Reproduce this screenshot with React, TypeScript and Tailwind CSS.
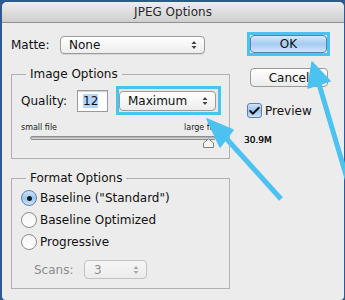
import { Check } from "lucide-react";

const font = { fontFamily: '"DejaVu Sans", "Liberation Sans", sans-serif' };

function Stepper({ dim = false }: { dim?: boolean }) {
    return (
        <svg width="6" height="10" viewBox="0 0 6 10" className="shrink-0">
            <path d="M0.5 4 L3 1 L5.5 4 Z" fill={dim ? "#a8a8a8" : "#444"} />
            <path d="M0.5 6 L3 9 L5.5 6 Z" fill={dim ? "#a8a8a8" : "#444"} />
        </svg>
    );
}

function Radio({ checked }: { checked?: boolean }) {
    return (
        <span
            className={`flex h-[16px] w-[16px] shrink-0 items-center justify-center rounded-full border ${
                checked
                    ? "border-[#5a7fb3] bg-gradient-to-b from-[#cfe3f8] via-[#9cc6f0] to-[#c9e2fa]"
                    : "border-[#8c8c8c] bg-gradient-to-b from-[#f4f4f4] to-[#ffffff]"
            }`}
        >
            {checked && <span className="h-[5px] w-[5px] rounded-full bg-[#1a1a1a]" />}
        </span>
    );
}

export default function App() {
    return (
        <div className="relative h-[300px] w-[345px] overflow-hidden bg-[#2e5b8f]" style={font}>
            {/* Dialog window */}
            <div className="ml-[2px] mt-[2px] flex h-[298px] w-[342px] flex-col rounded-t-[5px] rounded-b-[4px] bg-[#ececec] text-[12px] text-[#111]">
                {/* Title bar */}
                <div className="flex h-[21px] shrink-0 items-center justify-center rounded-t-[5px] border-b border-[#8f8f8f] bg-gradient-to-b from-[#ededed] to-[#cfcfcf] text-[12px] text-[#2a2a2a]">
                    JPEG Options
                </div>

                <div className="flex pl-[9px]">
                    {/* Left column */}
                    <div className="flex w-[219px] flex-col">
                        <div className="mt-[13px] flex h-[18px] items-center">
                            <span className="w-[49px]">Matte:</span>
                            <div className="flex h-[18px] w-[145px] items-center justify-between rounded-[4px] border border-[#9b9b9b] bg-gradient-to-b from-[#ffffff] to-[#ededed] pl-[8px] pr-[7px] shadow-[0_1px_0_#d8d8d8]">
                                <span>None</span>
                                <Stepper />
                            </div>
                        </div>

                        {/* Image Options */}
                        <fieldset className="mt-[13px] h-[92px] border border-[#b0b0b0] p-0">
                            <legend className="ml-[14px] px-[4px] leading-[14px]">Image Options</legend>
                            <div className="mt-[5px] flex h-[29px] items-center pl-[9px]">
                                <span className="w-[56px]">Quality:</span>
                                <div className="flex h-[22px] w-[31px] items-center border border-[#9a9a9a] bg-white pl-[5px] shadow-[inset_0_1px_1px_#cfcfcf]">
                                    <span className="bg-[#b5d5fc] leading-[14px]">12</span>
                                </div>
                                <div className="ml-[8px] flex h-[29px] w-[105px] items-center border-[3px] border-[#4cc2f0] bg-[#e6e6e6]">
                                    <div className="flex h-[20px] w-[97px] items-center justify-between rounded-[4px] border border-[#9b9b9b] bg-gradient-to-b from-[#ffffff] to-[#ededed] pl-[8px] pr-[7px]">
                                        <span>Maximum</span>
                                        <Stepper />
                                    </div>
                                </div>
                            </div>
                            <div className="mt-[8px] flex justify-between pl-[9px] pr-[10px] text-[8px] leading-[10px] text-[#222]">
                                <span>small file</span>
                                <span>large file</span>
                            </div>
                            <div className="relative ml-[18px] mt-[3px] h-[12px] w-[186px]">
                                <div className="mt-[1px] h-[4px] w-full rounded-full border border-[#8e8e8e] bg-gradient-to-b from-[#a9a9a9] to-[#e0e0e0]" />
                                <svg width="11" height="10" viewBox="0 0 11 10" className="absolute right-[2px] top-[2px]">
                                    <path d="M0.5 9.5 V5 L5.5 0.8 L10.5 5 V9.5 Z" fill="#f4f4f4" stroke="#7f7f7f" strokeWidth="1" strokeLinejoin="round" />
                                </svg>
                            </div>
                        </fieldset>

                        {/* Format Options */}
                        <fieldset className="mt-[12px] h-[118px] border border-[#b0b0b0] p-0">
                            <legend className="ml-[14px] px-[4px] leading-[14px]">Format Options</legend>
                            <div className="mt-[2px] flex flex-col pl-[9px]">
                                <label className="flex h-[22px] items-center gap-[3px]">
                                    <Radio checked />
                                    <span>Baseline (&quot;Standard&quot;)</span>
                                </label>
                                <label className="flex h-[22px] items-center gap-[3px]">
                                    <Radio />
                                    <span>Baseline Optimized</span>
                                </label>
                                <label className="flex h-[22px] items-center gap-[3px]">
                                    <Radio />
                                    <span>Progressive</span>
                                </label>
                            </div>
                            <div className="ml-[22px] mt-[7px] flex h-[19px] items-center text-[#8d8d8d]">
                                <span className="w-[50px]">Scans:</span>
                                <div className="flex h-[19px] w-[63px] items-center justify-between rounded-[4px] border border-[#c2c2c2] bg-gradient-to-b from-[#f6f6f6] to-[#ececec] pl-[9px] pr-[7px]">
                                    <span>3</span>
                                    <Stepper dim />
                                </div>
                            </div>
                        </fieldset>
                    </div>

                    {/* Right column */}
                    <div className="ml-[17px] flex flex-col">
                        <div className="mt-[9px] w-[83px] border-[3px] border-[#4cc2f0]">
                            <button className="flex h-[18px] w-full items-center justify-center rounded-[4px] border border-[#5b7fae] bg-gradient-to-b from-[#d6e8fb] via-[#a4cbf2] to-[#cfe5fb] text-[12px]">
                                OK
                            </button>
                        </div>
                        <button className="ml-[3px] mt-[12px] flex h-[19px] w-[78px] items-center justify-center rounded-[4px] border border-[#9a9a9a] bg-gradient-to-b from-[#ffffff] to-[#ececec] text-[12px]">
                            Cancel
                        </button>
                        <label className="mt-[16px] flex h-[15px] items-center gap-[3px]">
                            <span className="flex h-[15px] w-[15px] items-center justify-center rounded-[3px] border border-[#5a7fb3] bg-gradient-to-b from-[#cfe3f8] via-[#9cc6f0] to-[#c9e2fa]">
                                <Check size={14} strokeWidth={3.5} className="text-[#111]" />
                            </span>
                            <span>Preview</span>
                        </label>
                        <span className="ml-[-3px] mt-[17px] text-[9px] leading-[10px] text-[#111] [text-shadow:0_0_0.3px_#111]">30.9M</span>
                    </div>
                </div>
            </div>

            {/* Callout arrows */}
            <svg className="pointer-events-none absolute inset-0" width="345" height="300" viewBox="0 0 345 300">
                <g fill="#4cc2f0" stroke="#4cc2f0" strokeLinejoin="round">
                    <line x1="319" y1="84" x2="351" y2="192" strokeWidth="5" />
                    <path d="M312 62 L330 81 L308 88 Z" strokeWidth="1.5" />
                    <line x1="225" y1="137" x2="281" y2="199" strokeWidth="5" />
                    <path d="M207 119 L233 130 L220 147 Z" strokeWidth="1.5" />
                </g>
            </svg>
        </div>
    );
}
